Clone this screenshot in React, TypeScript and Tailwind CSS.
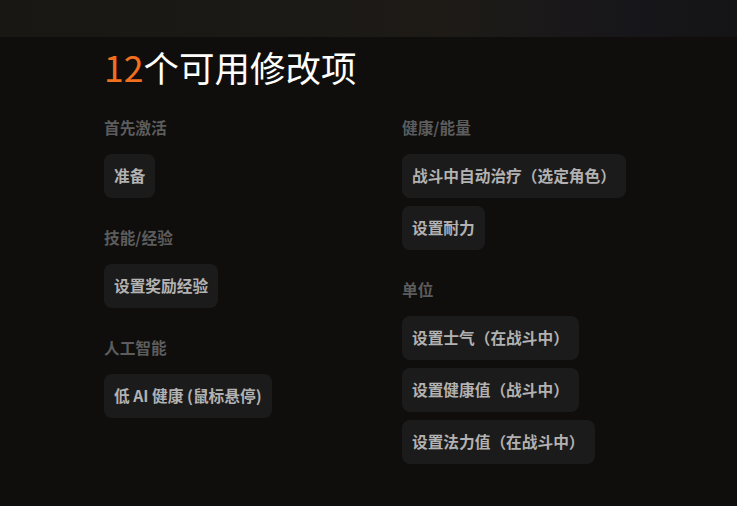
const sections = {
  left: [
    { title: "首先激活", items: ["准备"] },
    { title: "技能/经验", items: ["设置奖励经验"] },
    { title: "人工智能", items: ["低 AI 健康 (鼠标悬停)"] },
  ],
  right: [
    { title: "健康/能量", items: ["战斗中自动治疗（选定角色）", "设置耐力"] },
    { title: "单位", items: ["设置士气（在战斗中）", "设置健康值（战斗中）", "设置法力值（在战斗中）"] },
  ],
};

function Section({ title, items }: { title: string; items: string[] }) {
  return (
    <div className="flex flex-col items-start">
      <div className="h-5 mb-4 text-[15.7px] leading-5 font-semibold text-[#5c5c5c]">{title}</div>
      <div className="flex flex-col items-start gap-2">
        {items.map((item) => (
          <button
            key={item}
            type="button"
            className="h-11 px-[10px] rounded-lg bg-[#1c1b1b] text-[15.7px] font-bold text-[#b2b2b2]"
          >
            {item}
          </button>
        ))}
      </div>
    </div>
  );
}

export default function App() {
  return (
    <div
      className="min-h-[506px] w-full bg-[#0f0e0d] overflow-hidden"
      style={{ fontFamily: '"Noto Sans CJK SC", "Noto Sans", sans-serif' }}
    >
      <div className="h-[37px] bg-[linear-gradient(90deg,#191714_0%,#1b1915_30%,#1e1b17_60%,#17161a_85%,#141315_100%)]" />
      <div className="pl-[104px] pt-[6px]">
        <h1 className="text-[35.5px] leading-[48px] font-normal text-white">
          <span className="text-[#f26f1f]">12</span>个可用修改项
        </h1>
        <div className="mt-[27px] flex">
          <div className="w-[298px] flex flex-col gap-[30px]">
            {sections.left.map((s) => (
              <Section key={s.title} {...s} />
            ))}
          </div>
          <div className="flex flex-col gap-[30px]">
            {sections.right.map((s) => (
              <Section key={s.title} {...s} />
            ))}
          </div>
        </div>
      </div>
    </div>
  );
}
